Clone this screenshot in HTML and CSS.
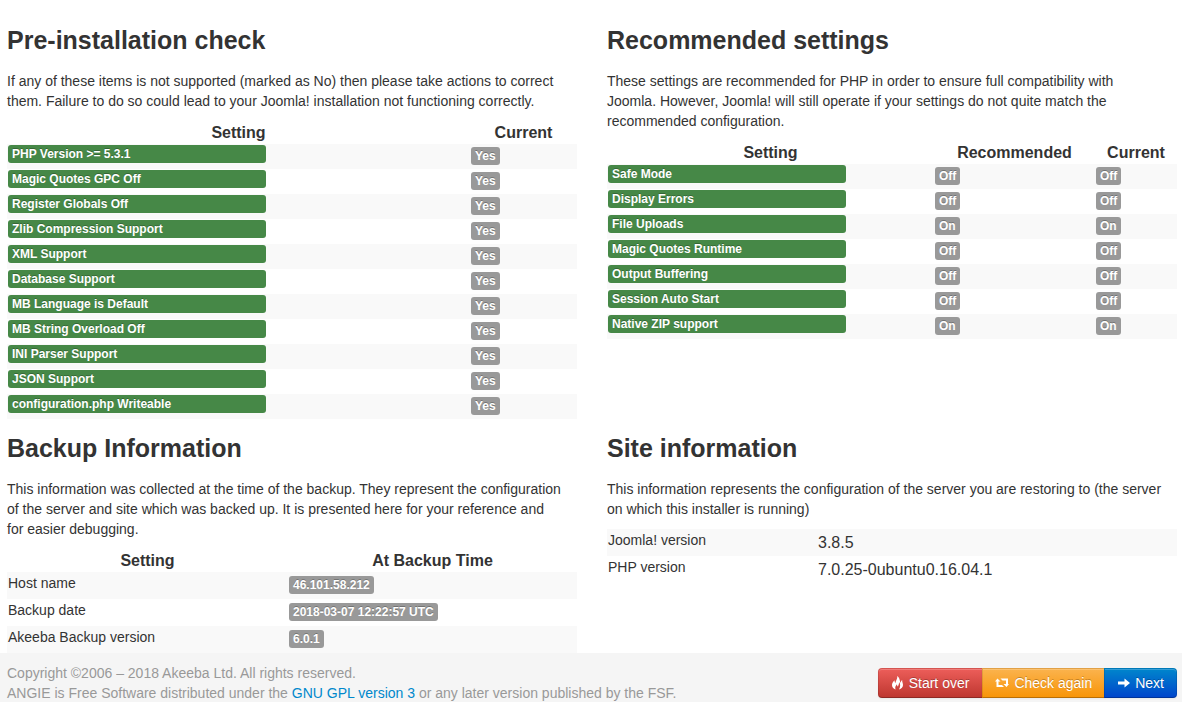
FILE: index.html
```
<!DOCTYPE html>
<html lang="en">
<head>
<meta charset="utf-8">
<title>Pre-installation check</title>
<link rel="stylesheet" href="styles.css">
</head>
<body>
<main class="content">
  <section>
    <h3>Pre-installation check</h3>
    <p>If any of these items is not supported (marked as No) then please take actions to correct them. Failure to do so could lead to your Joomla! installation not functioning correctly.</p>
    <table class="checks">
      <colgroup><col><col class="col-current-wide"></colgroup>
      <thead><tr><th>Setting</th><th>Current</th></tr></thead>
      <tbody>
        <tr><td><span class="label label-long">PHP Version &gt;= 5.3.1</span></td><td><span class="badge">Yes</span></td></tr>
        <tr><td><span class="label label-long">Magic Quotes GPC Off</span></td><td><span class="badge">Yes</span></td></tr>
        <tr><td><span class="label label-long">Register Globals Off</span></td><td><span class="badge">Yes</span></td></tr>
        <tr><td><span class="label label-long">Zlib Compression Support</span></td><td><span class="badge">Yes</span></td></tr>
        <tr><td><span class="label label-long">XML Support</span></td><td><span class="badge">Yes</span></td></tr>
        <tr><td><span class="label label-long">Database Support</span></td><td><span class="badge">Yes</span></td></tr>
        <tr><td><span class="label label-long">MB Language is Default</span></td><td><span class="badge">Yes</span></td></tr>
        <tr><td><span class="label label-long">MB String Overload Off</span></td><td><span class="badge">Yes</span></td></tr>
        <tr><td><span class="label label-long">INI Parser Support</span></td><td><span class="badge">Yes</span></td></tr>
        <tr><td><span class="label label-long">JSON Support</span></td><td><span class="badge">Yes</span></td></tr>
        <tr><td><span class="label label-long">configuration.php Writeable</span></td><td><span class="badge">Yes</span></td></tr>
      </tbody>
    </table>
  </section>

  <section>
    <h3>Recommended settings</h3>
    <p>These settings are recommended for PHP in order to ensure full compatibility with<br>Joomla. However, Joomla! will still operate if your settings do not quite match the<br>recommended configuration.</p>
    <table class="checks">
      <colgroup><col><col class="col-recommended"><col class="col-current"></colgroup>
      <thead><tr><th>Setting</th><th>Recommended</th><th>Current</th></tr></thead>
      <tbody>
        <tr><td><span class="label">Safe Mode</span></td><td><span class="badge">Off</span></td><td><span class="badge">Off</span></td></tr>
        <tr><td><span class="label">Display Errors</span></td><td><span class="badge">Off</span></td><td><span class="badge">Off</span></td></tr>
        <tr><td><span class="label">File Uploads</span></td><td><span class="badge">On</span></td><td><span class="badge">On</span></td></tr>
        <tr><td><span class="label">Magic Quotes Runtime</span></td><td><span class="badge">Off</span></td><td><span class="badge">Off</span></td></tr>
        <tr><td><span class="label">Output Buffering</span></td><td><span class="badge">Off</span></td><td><span class="badge">Off</span></td></tr>
        <tr><td><span class="label">Session Auto Start</span></td><td><span class="badge">Off</span></td><td><span class="badge">Off</span></td></tr>
        <tr><td><span class="label">Native ZIP support</span></td><td><span class="badge">On</span></td><td><span class="badge">On</span></td></tr>
      </tbody>
    </table>
  </section>

  <section>
    <h3>Backup Information</h3>
    <p>This information was collected at the time of the backup. They represent the configuration<br>of the server and site which was backed up. It is presented here for your reference and<br>for easier debugging.</p>
    <table class="info">
      <colgroup><col><col class="col-backup"></colgroup>
      <thead><tr><th>Setting</th><th>At Backup Time</th></tr></thead>
      <tbody>
        <tr><td><span class="name">Host name</span></td><td><span class="badge">46.101.58.212</span></td></tr>
        <tr><td><span class="name">Backup date</span></td><td><span class="badge">2018-03-07 12:22:57 UTC</span></td></tr>
        <tr><td><span class="name">Akeeba Backup version</span></td><td><span class="badge">6.0.1</span></td></tr>
      </tbody>
    </table>
  </section>

  <section>
    <h3>Site information</h3>
    <p>This information represents the configuration of the server you are restoring to (the server on which this installer is running)</p>
    <table class="info">
      <colgroup><col class="col-name"><col></colgroup>
      <tbody>
        <tr><td><span class="name">Joomla! version</span></td><td>3.8.5</td></tr>
        <tr><td><span class="name">PHP version</span></td><td>7.0.25-0ubuntu0.16.04.1</td></tr>
      </tbody>
    </table>
  </section>
</main>

<footer class="footer">
  <div class="legal">
    <div>Copyright ©2006 – 2018 Akeeba Ltd. All rights reserved.</div>
    <div>ANGIE is Free Software distributed under the <a href="#">GNU GPL version 3</a> or any later version published by the FSF.</div>
  </div>
  <div class="btn-group">
    <button type="button" class="btn btn-danger">
      <svg width="13" height="14" viewBox="0 0 13 14" aria-hidden="true"><path d="M6 0C7 2.500 4.800 4 4.500 7C3.700 6.500 3.500 5.500 3.700 4.300C2 5.500 1 7.300 1 9C1 11.200 2.300 12.800 4.600 13.500C3.700 11.500 4.500 9.800 6 8.200C6 9.400 6.400 10 7 10.500C7.300 9 8.300 8 8 6C9.500 7.500 9.700 10.500 8 13.500C10.500 12.800 12 11.200 12 9C12 7 11 6.300 11.200 4C10.200 4.800 9.800 5.500 9.700 6.700C8.500 5.500 9.200 1.500 6 0Z"/></svg>
      Start over</button>
    <button type="button" class="btn btn-warning">
      <svg width="14" height="14" viewBox="0 0 14 14" aria-hidden="true"><path d="M2.500 2.500L5.500 5.500H3.500V9H7L9 11H1.500V5.500H0ZM5.500 2.500H13V8H14L11.500 11L8.500 8H11V4.500H7.500Z"/></svg>
      Check again</button>
    <button type="button" class="btn btn-primary">
      <svg width="13" height="14" viewBox="0 0 13 14" aria-hidden="true"><path d="M7.500 2.500L13 7L7.500 11.500V8.500H1V5.500H7.500Z"/></svg>
      Next</button>
  </div>
</footer>
</body>
</html>
```
FILE: styles.css
```
* { box-sizing: border-box; }

body {
  margin: 0;
  height: 100vh;
  display: flex;
  flex-direction: column;
  overflow: hidden;
  background: #fff;
  color: #333;
  font: 14px/20px "Liberation Sans", Arial, sans-serif;
}

.content {
  flex: 1;
  min-height: 0;
  overflow: hidden;
  display: grid;
  grid-template-columns: 1fr 1fr;
  align-content: start;
  gap: 10px 30px;
  padding: 20px 5px 0 7px;
}

h3 { margin: 0 0 11px; font-size: 25px; line-height: 40px; }
p { margin: 0 0 10px; }

table {
  width: 100%;
  table-layout: fixed;
  border-collapse: collapse;
  font-size: 16px;
}
th { padding: 1px; line-height: 21px; text-align: center; }
td { padding: 1px; vertical-align: top; }
tbody tr:nth-child(odd) { background: #f9f9f9; }
.checks { margin-bottom: -1px; }
.checks td { line-height: 23px; }
.info td { line-height: 25px; }

.col-current-wide { width: 107px; }
.col-recommended { width: 161px; }
.col-current { width: 82px; }
.col-backup { width: 289px; }
.col-name { width: 210px; }

.label,
.badge {
  padding: 2px 4px;
  border-radius: 3px;
  color: #fff;
  font-size: 12px;
  font-weight: bold;
  line-height: 14px;
  text-shadow: 0 -1px 0 rgba(0, 0, 0, 0.25);
  white-space: nowrap;
}
.label { display: block; max-width: 238px; background: #468847; }
.label-long { max-width: 258px; }
.badge { display: inline-block; vertical-align: top; margin-top: 2px; background: #999; }
.info .badge { margin-top: 3px; }
.name { display: block; font-size: 14px; line-height: 20px; }

.footer {
  flex: none;
  display: flex;
  justify-content: space-between;
  align-items: center;
  margin-bottom: -1px;
  padding: 10px 5px 0 7px;
  background: #f5f5f5;
  color: #999;
}
.footer a { color: #08c; text-decoration: none; }

.btn-group { display: flex; }
.btn {
  display: flex;
  align-items: center;
  gap: 5px;
  padding: 4px 12px;
  border: 1px solid;
  border-color: rgba(0, 0, 0, 0.1) rgba(0, 0, 0, 0.1) rgba(0, 0, 0, 0.25);
  color: #fff;
  font: inherit;
  text-shadow: 0 -1px 0 rgba(0, 0, 0, 0.25);
  box-shadow: inset 0 1px 0 rgba(255, 255, 255, 0.2), 0 1px 2px rgba(0, 0, 0, 0.05);
  cursor: pointer;
}
.btn + .btn { margin-left: -1px; }
.btn:first-child { padding-right: 13px; border-radius: 4px 0 0 4px; }
.btn:last-child { border-radius: 0 4px 4px 0; }
.btn svg { fill: currentColor; }
.btn-danger { background: linear-gradient(#ee5f5b, #bd362f) border-box; }
.btn-warning { background: linear-gradient(#fbb450, #f89406) border-box; }
.btn-primary { background: linear-gradient(#08c, #04c) border-box; }
```
